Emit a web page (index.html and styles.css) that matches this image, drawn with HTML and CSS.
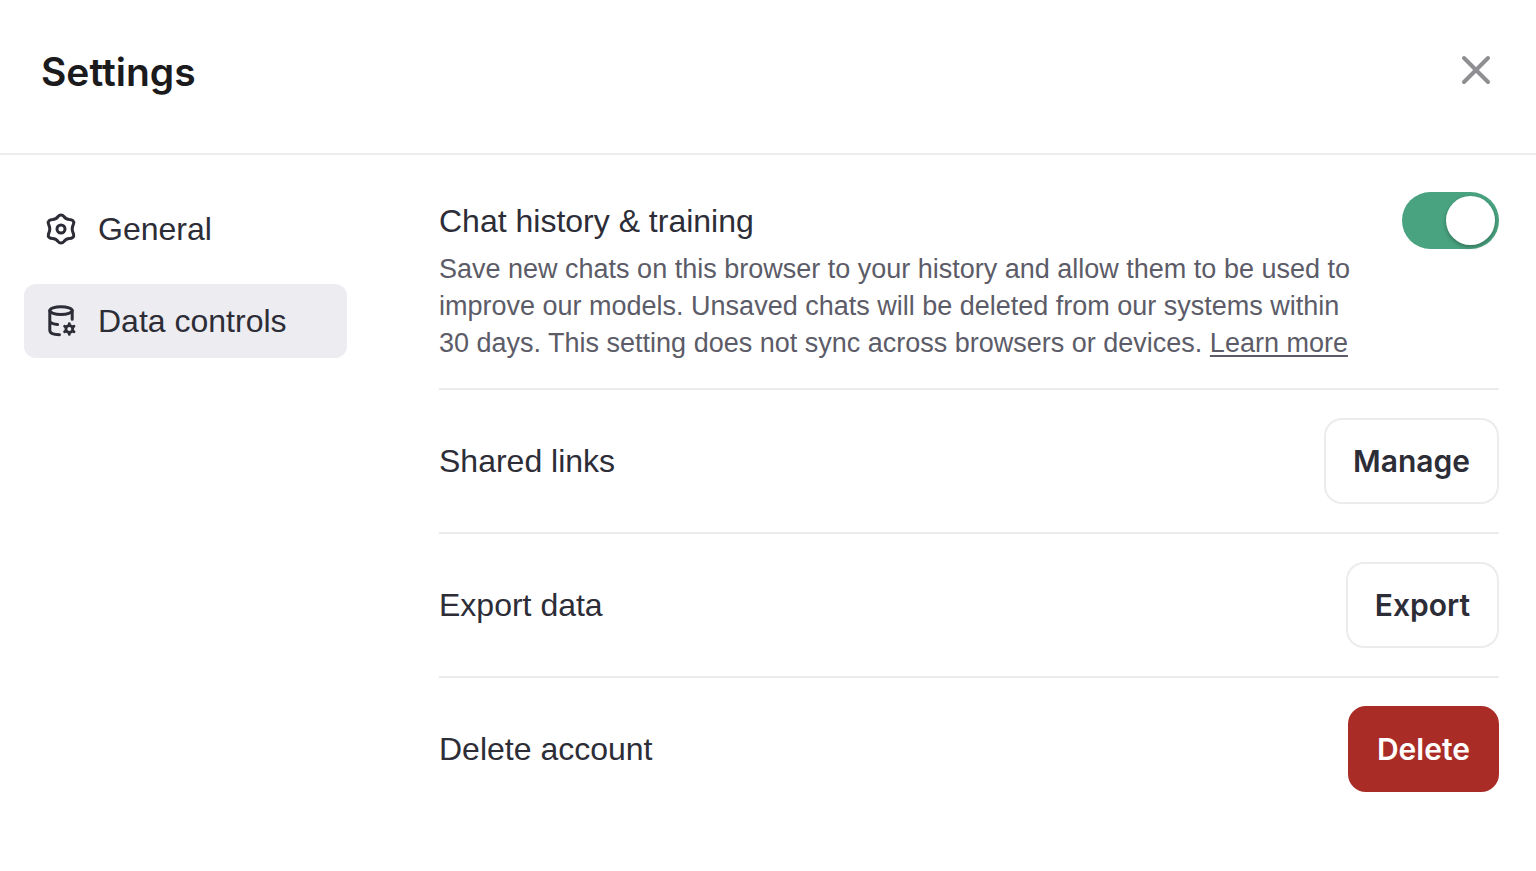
FILE: index.html
```html
<!DOCTYPE html>
<html lang="en">
<head>
    <meta charset="UTF-8">
    <meta name="viewport" content="width=device-width, initial-scale=1">
    <title>Settings</title>
    <link rel="stylesheet" href="styles.css">
</head>
<body>
    <header class="header">
        <h1>Settings</h1>
        <button type="button" class="close-button" aria-label="Close">
            <svg width="32" height="32" viewBox="0 0 32 32" fill="none" stroke="currentColor" stroke-width="4" stroke-linecap="round">
                <path d="M4 4l24 24M28 4L4 28"/>
            </svg>
        </button>
    </header>

    <div class="settings">
        <nav class="sidebar">
            <a href="#general" class="tab">
                <svg width="34" height="34" viewBox="0 0 34 34" fill="none" stroke="currentColor" stroke-width="3" stroke-linejoin="round">
                    <path d="M14.2 4.3C15.5 2.6 18.5 2.6 19.8 4.3C21.2 6.4 22.9 7.4 25.4 7.5C28.3 7.5 30.3 9.1 29.6 11.7C29.3 12.9 28.2 14.6 28.2 17C28.2 19.4 29.3 21.1 29.6 22.3C30.3 24.9 28.3 26.5 25.4 26.5C22.9 26.6 21.2 27.6 19.8 29.7C18.5 31.4 15.5 31.4 14.2 29.7C12.8 27.6 11.1 26.6 8.6 26.5C5.7 26.5 3.7 24.9 4.4 22.3C4.7 21.1 5.8 19.4 5.8 17C5.8 14.6 4.7 12.9 4.4 11.7C3.7 9.1 5.7 7.5 8.6 7.5C11.1 7.4 12.8 6.4 14.2 4.3Z"/>
                    <circle cx="17" cy="17" r="4"/>
                </svg>
                General
            </a>
            <a href="#data-controls" class="tab active" aria-current="page">
                <svg width="34" height="34" viewBox="0 0 34 34" fill="none" stroke="currentColor" stroke-width="3" stroke-linecap="round">
                    <ellipse cx="17" cy="6.6" rx="11.2" ry="3.9"/>
                    <path d="M5.8 6.6V26.5C5.8 29 9.6 30.6 15.5 30.8M28.2 6.6V15.2M5.8 17.6C7 19.2 10 20.2 13.6 20.6"/>
                    <circle cx="25.3" cy="25" r="3.4" stroke-width="2.8"/>
                    <path stroke-width="2.8" d="M25.3 19.6V21M25.3 29V30.4M20.6 22.3L21.8 23M28.8 27L30 27.7M30 22.3L28.8 23M21.8 27L20.6 27.7"/>
                </svg>
                Data controls
            </a>
        </nav>

        <main class="content">
            <section class="row history">
                <div class="history-text">
                    <h2><label for="history">Chat history &amp; training</label></h2>
                    <p>Save new chats on this browser to your history and allow them to be used to improve our models. Unsaved chats will be deleted from our systems within 30 days. This setting does not sync across browsers or devices. <a href="#learn-more">Learn more</a></p>
                </div>
                <input type="checkbox" role="switch" id="history" class="switch" checked>
            </section>
            <section class="row">
                <h2>Shared links</h2>
                <button type="button" class="btn">Manage</button>
            </section>
            <section class="row">
                <h2>Export data</h2>
                <button type="button" class="btn">Export</button>
            </section>
            <section class="row">
                <h2>Delete account</h2>
                <button type="button" class="btn btn-danger">Delete</button>
            </section>
        </main>
    </div>
</body>
</html>
```
FILE: styles.css
```css
* {
    box-sizing: border-box;
}
body {
    margin: 0;
    background: #fff;
    color: #2d2d37;
    font-family: "Liberation Sans", Arial, sans-serif;
    font-size: 32px;
}
h1, h2, p {
    margin: 0;
}
button {
    font-family: Inter, sans-serif;
    cursor: pointer;
}
.header {
    display: flex;
    justify-content: space-between;
    align-items: flex-start;
    padding: 40px 44px 49px 41px;
    border-bottom: 2px solid #ececec;
}
h1 {
    color: #1b1b1d;
    font-family: Inter, sans-serif;
    font-size: 39px;
    font-weight: 600;
    line-height: 64px;
}
.close-button {
    display: flex;
    padding: 14px 0;
    border: none;
    background: none;
    color: #8e8e93;
}
.settings {
    display: grid;
    grid-template-columns: 323px 1fr;
    gap: 92px;
    padding: 37px 37px 36px 24px;
}
.sidebar {
    display: flex;
    flex-direction: column;
    gap: 18px;
}
.tab {
    display: flex;
    align-items: center;
    gap: 20px;
    height: 74px;
    padding: 0 20px;
    border-radius: 12px;
    color: #2d2d37;
    text-decoration: none;
}
.tab.active {
    background: #ececf1;
}
.row {
    display: flex;
    justify-content: space-between;
    align-items: center;
    gap: 40px;
    padding: 28px 0;
    border-bottom: 2px solid #ececec;
}
.row:last-child {
    border-bottom: none;
}
.row h2 {
    font-size: 32px;
    font-weight: normal;
}
.history {
    align-items: flex-start;
    padding: 0 0 26px;
}
.history h2 {
    line-height: 59px;
}
.history p {
    color: #5c5c68;
    font-size: 27px;
    line-height: 37px;
}
.history a {
    color: inherit;
    text-underline-offset: 3px;
}
.switch {
    flex: none;
    appearance: none;
    width: 97px;
    height: 57px;
    margin: 0;
    padding: 4px;
    border-radius: 29px;
    background: #49a380;
    cursor: pointer;
}
.switch::before {
    content: "";
    display: block;
    width: 49px;
    height: 49px;
    border-radius: 50%;
    background: #fff;
    box-shadow: 0 2px 4px rgba(0, 0, 0, 0.3);
}
.switch:checked::before {
    margin-left: auto;
}
.switch:not(:checked) {
    background: #d4d4da;
}
.btn {
    height: 86px;
    padding: 0 27px;
    border: 2px solid #ececec;
    border-radius: 18px;
    background: #fff;
    color: #2d2d37;
    font-size: 30px;
    font-weight: 600;
}
.btn-danger {
    border-color: #a92d26;
    background: #a92d26;
    color: #fff;
}
```
